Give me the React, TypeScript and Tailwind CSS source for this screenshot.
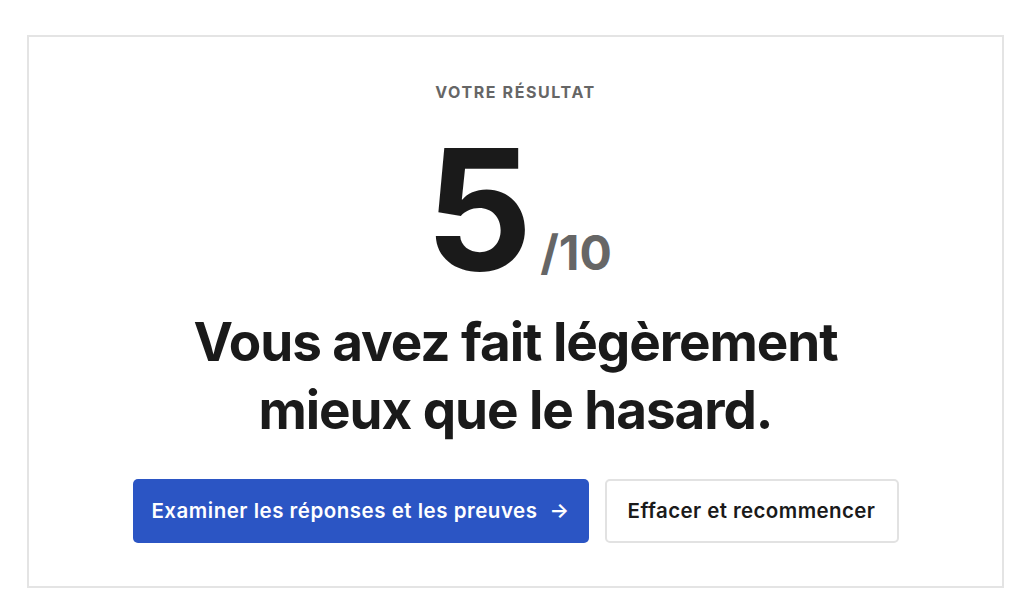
import React from "react";

export default function App() {
  return (
    <div className="w-[1024px] h-[606px] bg-white pt-[35px] pl-[27px]" style={{ fontFamily: "Inter, 'Noto Sans', sans-serif" }}>
      <div className="w-[977px] h-[553px] border-2 border-[#e4e4e4] flex flex-col items-center">
        <div className="mt-[45px] text-[16px] leading-[20px] font-bold tracking-[0.1em] text-[#666666]">VOTRE RÉSULTAT</div>
        <div className="mt-[22px] h-[170px] flex items-baseline ml-[6px]">
          <span className="text-[168px] leading-[170px] font-bold text-[#1a1a1a] tracking-[-0.02em]">5</span>
          <span className="ml-[11px] text-[48px] leading-[50px] font-bold text-[#666666]">/10</span>
        </div>
        <h1 className="mt-[14px] text-[53px] leading-[68px] font-bold text-[#1a1a1a] text-center tracking-[-0.02em]">
          Vous avez fait légèrement
          <br />
          mieux que le hasard.
        </h1>
        <div className="mt-[35px] flex gap-[16px]">
          <button className="h-[64px] w-[456px] rounded-[5px] bg-[#2b55c4] text-white text-[20.5px] tracking-[0.025em] font-semibold flex items-center justify-center gap-[12px]">
            <span>Examiner les réponses et les preuves</span>
            <span>→</span>
          </button>
          <button className="h-[64px] w-[294px] rounded-[5px] border-2 border-[#e2e2e2] bg-white text-[#1a1a1a] text-[20.5px] tracking-[0.02em] font-semibold flex items-center justify-center">
            Effacer et recommencer
          </button>
        </div>
      </div>
    </div>
  );
}
